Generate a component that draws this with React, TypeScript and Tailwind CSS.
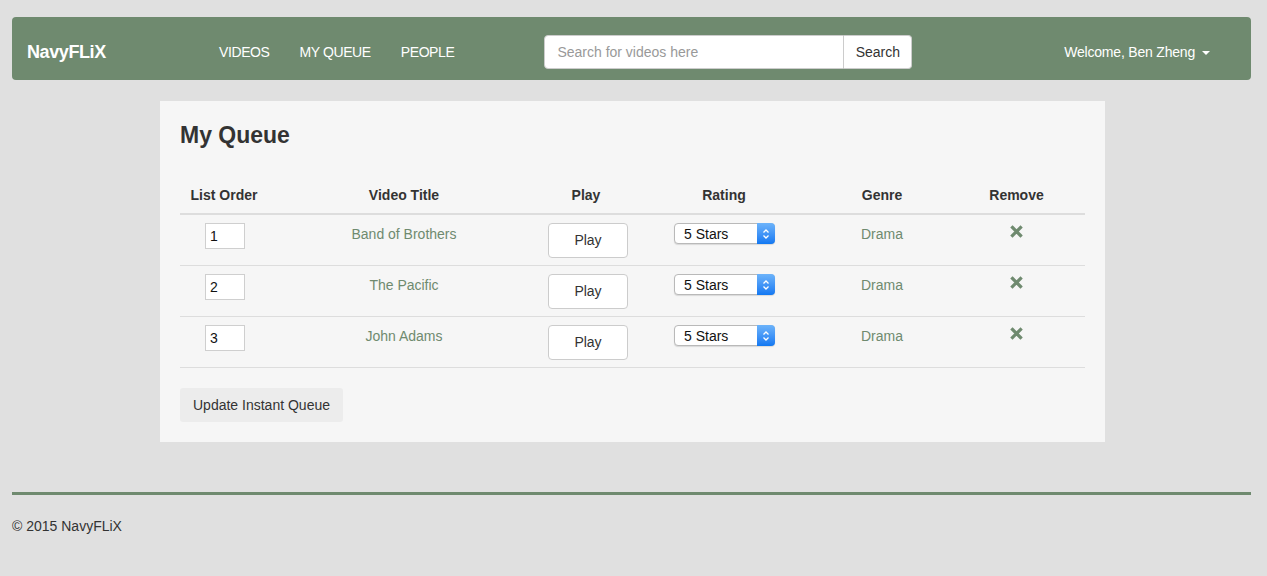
import React from "react";

const queue = [
  { id: 1, title: "Band of Brothers", genre: "Drama" },
  { id: 2, title: "The Pacific", genre: "Drama" },
  { id: 3, title: "John Adams", genre: "Drama" },
];

function RatingSelect() {
  return (
    <div className="relative inline-flex h-[21px] w-[101px] items-center rounded-[4px] border border-[#b9b9b9] bg-white shadow-[0_1px_1px_rgba(0,0,0,0.12)]">
      <span className="pl-[9px] text-[14px] leading-none text-[#111]">5 Stars</span>
      <div className="absolute right-[-1px] top-[-1px] flex h-[21px] w-[18px] flex-col items-center justify-center rounded-r-[4px] bg-gradient-to-b from-[#6cb3fa] to-[#0f78f2]">
        <svg width="8" height="12" viewBox="0 0 8 12" fill="none">
          <path d="M1.5 4.5 L4 2 L6.5 4.5" stroke="white" strokeWidth="1.3" />
          <path d="M1.5 7.5 L4 10 L6.5 7.5" stroke="white" strokeWidth="1.3" />
        </svg>
      </div>
    </div>
  );
}

function Navbar() {
  return (
    <div className="ml-[12px] mr-[16px] flex h-[63px] items-center rounded-[4px] bg-[#6f8a6f] pt-[7px] text-white">
      <span className="ml-[15px] w-[177px] text-[18px] font-bold tracking-[-0.4px]">NavyFLiX</span>
      <nav className="flex text-[14px] tracking-[-0.4px]">
        <a className="px-[15px]">VIDEOS</a>
        <a className="px-[15px]">MY QUEUE</a>
        <a className="px-[15px]">PEOPLE</a>
      </nav>
      <div className="ml-[75px] flex">
        <input
          placeholder="Search for videos here"
          className="h-[34px] w-[300px] rounded-l-[4px] border border-[#cccccc] bg-white px-[12px] text-[14px] text-[#555] outline-none placeholder:text-[#999]"
        />
        <button className="h-[34px] w-[68px] rounded-r-[4px] border border-l-0 border-[#cccccc] bg-white text-[14px] text-[#333]">
          Search
        </button>
      </div>
      <div className="ml-auto mr-[41px] flex items-center gap-[7px] text-[14px]">
        <span className="tracking-[-0.2px]">Welcome, Ben Zheng</span>
        <span className="mt-[1px] h-0 w-0 border-x-[4px] border-t-[4px] border-x-transparent border-t-white" />
      </div>
    </div>
  );
}

function QueueTable() {
  return (
    <table className="mt-[28px] w-full table-fixed border-collapse text-[14px]">
      <colgroup>
        <col className="w-[88px]" />
        <col className="w-[272px]" />
        <col className="w-[92px]" />
        <col className="w-[184px]" />
        <col className="w-[132px]" />
        <col />
      </colgroup>
      <thead>
        <tr className="border-b-2 border-[#dddddd]">
          {["List Order", "Video Title", "Play", "Rating", "Genre", "Remove"].map((h) => (
            <th key={h} className="p-[8px] text-center font-bold leading-[20px] text-[#333]">
              {h}
            </th>
          ))}
        </tr>
      </thead>
      <tbody>
        {queue.map((row) => (
          <tr key={row.id} className="border-b border-[#dddddd]">
            <td className="px-[8px] pb-[7px] pt-[8px] align-top">
              <input
                defaultValue={row.id}
                className="ml-[17px] h-[26px] w-[40px] border border-[#cfcfcf] bg-white px-[4px] text-[14px] text-[#111] outline-none"
              />
            </td>
            <td className="p-[8px] pt-[9px] text-center align-top leading-[20px] text-[#6f8a6f]">{row.title}</td>
            <td className="px-[8px] pb-[7px] pt-[8px] text-center align-top">
              <button className="h-[35px] w-[80px] rounded-[4px] border border-[#cccccc] bg-white text-[14px] text-[#333]">
                Play
              </button>
            </td>
            <td className="p-[8px] pl-[42px] align-top">
              <RatingSelect />
            </td>
            <td className="p-[8px] pt-[9px] text-center align-top leading-[20px] text-[#6f8a6f]">{row.genre}</td>
            <td className="p-[8px] pt-[10px] text-center align-top">
              <svg width="13" height="13" viewBox="0 0 13 13" className="mx-auto">
                <path d="M2.5 2.5 L10.5 10.5 M10.5 2.5 L2.5 10.5" stroke="#6f8a6f" strokeWidth="3.2" strokeLinecap="square" />
              </svg>
            </td>
          </tr>
        ))}
      </tbody>
    </table>
  );
}

export default function App() {
  return (
    <div className="min-h-[576px] bg-[#e0e0e0] pb-[30px] pt-[17px] font-['Liberation_Sans',Arial,sans-serif] text-[#333]">
      <Navbar />
      <div className="ml-[160px] mt-[21px] w-[945px] bg-[#f6f6f6] px-[20px] pb-[20px] pt-[20px]">
        <h2 className="text-[23px] font-bold leading-[28px] text-[#333]">My Queue</h2>
        <QueueTable />
        <button className="mt-[20px] h-[34px] rounded-[3px] bg-[#ececec] px-[13px] text-[14px] text-[#333]">
          Update Instant Queue
        </button>
      </div>
      <footer className="ml-[12px] mr-[16px] mt-[50px]">
        <div className="h-[3px] bg-[#6f8a6f]" />
        <p className="mt-[21px] text-[14px] text-[#333]">© 2015 NavyFLiX</p>
      </footer>
    </div>
  );
}
